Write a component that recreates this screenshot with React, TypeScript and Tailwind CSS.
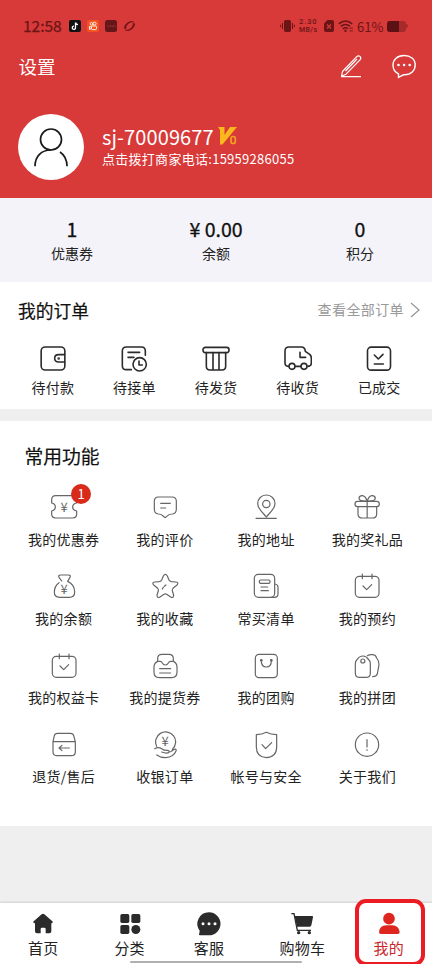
import type { ReactNode } from "react";

type Item = { label: string; icon: ReactNode; badge?: number };

const Yen = ({ y }: { y: number }) => (
  <text x="42" y={y} textAnchor="middle" fontSize="39" fill="#666" stroke="none">
    ¥
  </text>
);

const calendar = (
  <>
    <rect x="7" y="13" width="71" height="63" rx="12" />
    <path d="M28 6V20M57 6V20M30 42L41 53L56 38" />
  </>
);

const orders: Item[] = [
  {
    label: "待付款",
    icon: (
      <>
        <rect x="6.5" y="6" width="71" height="69" rx="12" />
        <path d="M77 29H59Q47 29 47 40Q47 51 59 51H77" />
        <circle cx="59" cy="40.500" r="1.500" />
      </>
    ),
  },
  {
    label: "待接单",
    icon: (
      <>
        <path d="M76 31V18Q76 6 64 6H19Q7 6 7 18V62Q7 74 19 74H34M24 22H59M24 37H42M57 48V60H67" />
        <circle cx="59" cy="58" r="20" />
      </>
    ),
  },
  {
    label: "待发货",
    icon: (
      <>
        <rect x="3" y="7" width="78" height="16" rx="7" />
        <path d="M13 23V64Q13 75 24 75H60Q71 75 71 64V23M33 23V74M51 23V74" />
      </>
    ),
  },
  {
    label: "待收货",
    icon: (
      <>
        <path d="M13 64Q3 64 3 54V18Q3 6 15 6H52Q63 6 64 19L77 28Q82 32 82 40V54Q82 64 71 64M34 64H50M48 22V37H65" />
        <circle cx="24" cy="64" r="9" />
        <circle cx="60" cy="64" r="9" />
      </>
    ),
  },
  {
    label: "已成交",
    icon: (
      <>
        <rect x="7.500" y="6.500" width="69" height="69" rx="11" />
        <path d="M28 30L40 42L54 28M28 57H55" />
      </>
    ),
  },
];

const features: Item[] = [
  {
    label: "我的优惠券",
    badge: 1,
    icon: (
      <>
        <path d="M5 20Q5 8 17 8H68Q80 8 80 20V30Q68 32 68 42Q68 52 80 54V64Q80 75 68 75H17Q5 75 5 64V54Q16 52 16 42Q16 32 5 30Z" />
        <Yen y={56} />
      </>
    ),
  },
  {
    label: "我的评价",
    icon: (
      <path d="M22 12H63Q76 12 76 25V49Q76 62 64 63Q54 63 50 68L43 74L35 68Q31 63 22 63Q10 62 10 49V25Q10 12 22 12ZM29 31H58M29 45H44" />
    ),
  },
  {
    label: "我的地址",
    icon: (
      <>
        <path d="M43 72C35 61 17 48 17 32A26 26 0 0 1 69 32C69 48 51 61 43 72ZM12 76H73" />
        <circle cx="43" cy="33" r="11" />
      </>
    ),
  },
  {
    label: "我的奖礼品",
    icon: (
      <>
        <rect x="6" y="25" width="73" height="16" rx="8" />
        <path d="M15 41V62Q15 75 28 75H58Q71 75 71 62V41M42.500 25V75M42 24Q18 26 18 15Q20 7 29 8Q38 10 42 24ZM43 24Q67 26 67 15Q65 7 56 8Q47 10 43 24Z" />
      </>
    ),
  },
  {
    label: "我的余额",
    icon: (
      <>
        <path d="M35 27L27 16Q24 9 31 9H56Q63 9 60 16L53 28C66 34 74 46 74 60Q74 76 58 76H29Q13 76 13 60C13 48 19 38 27 32" />
        <Yen y={66} />
      </>
    ),
  },
  {
    label: "我的收藏",
    icon: (
      <path d="M37 12Q43 2 49 12L54 24Q56 28 61 29L75 30Q85 32 77 40L66 49Q63 52 64 57L68 69Q68 80 59 75L47 67Q43 64 39 67L27 75Q18 80 18 69L22 57Q23 52 20 49L9 40Q1 32 11 30L25 29Q30 28 32 24ZM34 51L37 46M40 43L45 39" />
    ),
  },
  {
    label: "常买清单",
    icon: (
      <>
        <rect x="7" y="7" width="61" height="69" rx="12" />
        <rect x="22" y="24" width="32" height="10" rx="4" />
        <path d="M27 45H47M27 56H49M68 36Q78 37 78 46V66Q78 76 67 76H58" />
      </>
    ),
  },
  { label: "我的预约", icon: calendar },
  { label: "我的权益卡", icon: calendar },
  {
    label: "我的提货券",
    icon: (
      <path d="M20 28V20Q20 7 33 7H54Q67 7 67 20V28M20 28H27Q32 28 34 33Q37 39 43 39Q49 39 52 33Q54 28 60 28H67Q78 33 78 45V60Q78 77 62 77H25Q9 77 9 60V45Q9 33 20 28ZM26 50H59M26 63H59" />
    ),
  },
  {
    label: "我的团购",
    icon: (
      <>
        <rect x="10" y="7" width="66" height="70" rx="11" />
        <path d="M28 27Q28 45 43 45Q58 45 58 27" />
        <circle cx="28" cy="25" r="2.500" fill="#666" />
        <circle cx="58" cy="25" r="2.500" fill="#666" />
      </>
    ),
  },
  {
    label: "我的拼团",
    icon: (
      <>
        <path d="M7 64V35Q7 27 13 22Q19 12 30 12Q40 12 46 22Q52 27 52 35V64Q52 76 41 76H18Q7 76 7 64ZM43 11Q49 7 60 8Q68 9 71 18Q79 28 78 38L73 66Q70 74 59 74" />
        <circle cx="29.500" cy="27" r="6" />
      </>
    ),
  },
  {
    label: "退货/售后",
    icon: (
      <path d="M9 32L13 14Q15 7 22 7H62Q69 7 71 14L76 32M9 32H76V62Q76 74 64 74H21Q9 74 9 62ZM27 51H58M36 43L27 51L36 59" />
    ),
  },
  {
    label: "收银订单",
    icon: (
      <>
        <path d="M17 46A30 30 0 1 1 64 55M11 53Q22 47 32 53Q40 59 50 58Q57 60 54 64Q48 69 32 63M59 62L70 55Q77 53 75 60Q68 78 44 80Q28 80 17 72" />
        <Yen y={45} />
      </>
    ),
  },
  {
    label: "帐号与安全",
    icon: <path d="M43 4Q30 11 13 11V48Q13 78 43 80Q74 78 74 48V11Q56 11 43 4ZM30 41L41 53L59 35" />,
  },
  {
    label: "关于我们",
    icon: (
      <>
        <circle cx="42" cy="41" r="35" />
        <path d="M42 26V48M42 56V58" />
      </>
    ),
  },
];

const tabs: Item[] = [
  {
    label: "首页",
    icon: (
      <path d="M38 13Q42 10 46 13L70 34Q74 39 67 40V64Q67 70 61 70H50V57Q50 53 46 53H39Q35 53 35 57V70H24Q18 70 18 64V40Q10 39 14 34Z" />
    ),
  },
  {
    label: "分类",
    icon: (
      <>
        <rect x="13" y="12" width="27" height="27" rx="5" />
        <rect x="46" y="12" width="27" height="27" rx="5" />
        <rect x="13" y="45" width="27" height="27" rx="5" />
        <circle cx="59.500" cy="58.500" r="13.500" />
      </>
    ),
  },
  {
    label: "客服",
    icon: (
      <>
        <path d="M42 7A34.500 34.500 0 1 1 42 76H14Q10 75 13 70L14 62A34.500 34.500 0 0 1 42 7Z" />
        <g fill="#fff">
          <circle cx="24" cy="41" r="4.500" />
          <circle cx="42" cy="41" r="4.500" />
          <circle cx="60" cy="41" r="4.500" />
        </g>
      </>
    ),
  },
  {
    label: "购物车",
    icon: (
      <>
        <path d="M20 18H72Q76 18 75 22L70 46Q69 50 65 50H27Z" />
        <path d="M10 11H18L28 61H69" fill="none" stroke="#2b2b2b" strokeWidth="4" />
        <circle cx="32" cy="68" r="5" />
        <circle cx="64" cy="68" r="5" />
      </>
    ),
  },
  {
    label: "我的",
    icon: (
      <>
        <circle cx="42" cy="26" r="17.500" />
        <path d="M12 66Q14 46 34 46H52Q71 46 74 66Q74 72 68 72H18Q12 72 12 66Z" />
      </>
    ),
  },
];

const StatusBar = () => (
  <div className="flex h-[52px] items-center pr-6 pl-[23px] text-[#6c1517]">
    <span className="w-[46px] text-[15.5px] leading-none [-webkit-text-stroke:0.25px]">12:58</span>
    <svg viewBox="0 0 12 12" className="size-3">
      <rect width="12" height="12" rx="2" fill="#111" />
      <path d="M6.500 2.500V7.800A1.600 1.600 0 1 1 5 6.200M6.500 2.500Q7 4.500 9 4.600" fill="none" stroke="#fff" strokeWidth="1.300" />
    </svg>
    <svg viewBox="0 0 12 12" className="ml-1.5 size-3" fill="none" stroke="#fff" strokeWidth="0.900">
      <rect width="12" height="12" rx="2" fill="#f4511e" stroke="none" />
      <circle cx="4.500" cy="3.800" r="1.300" />
      <circle cx="7.600" cy="3.600" r="1.500" />
      <rect x="4.500" y="6" width="5" height="3.600" rx="1" />
      <path d="M4.500 7.200L2.500 6.300V9.400L4.500 8.500" />
    </svg>
    <span className="ml-1.5 flex size-3 items-center justify-center rounded-[2.5px] bg-[#651619]">
      <svg viewBox="0 0 10 3" className="w-[9px]" fill="none" stroke="#a63a3b" strokeWidth="0.700">
        <path d="M0.500 0.500L1.500 2.500L2.500 0.500M3.600 0.500V2.500M4.700 0.500L5.700 2.500L6.700 0.500" />
        <circle cx="8.400" cy="1.500" r="1" />
      </svg>
    </span>
    <svg viewBox="0 0 13 12" className="ml-1.5 h-3 w-[13px]" fill="currentColor">
      <path d="M1 8.500C1 4 6 0.300 11 1.400C7 1.800 3.500 4.500 3 7.500Q2.500 9.500 1 8.500ZM12 3.500C12 8 7 11.700 2 10.600C6 10.200 9.500 7.500 10 4.500Q10.500 2.500 12 3.500Z" />
      <path d="M3 9Q1 6 5 3Q8 0.800 11 2M10 3Q12 6 8 9Q5 11.200 2 10" fill="none" stroke="currentColor" strokeWidth="0.700" />
    </svg>
    <svg viewBox="0 0 15 12" className="ml-auto h-3 w-[15px]">
      <rect x="4" y="0" width="7" height="12" rx="1.800" fill="currentColor" />
      <path d="M2.500 3V9M0.600 4.800V7.200M12.500 3V9M14.400 4.800V7.200" fill="none" stroke="currentColor" />
    </svg>
    <span className="ml-1 flex w-[21px] flex-col font-[Roboto,sans-serif] text-[7.5px] font-medium">
      <span className="h-2 leading-2 tracking-[0.9px]">2.30</span>
      <span className="h-2 text-[7px] leading-2 tracking-[0.4px]">MB/s</span>
    </span>
    <svg viewBox="0 0 10 12" className="ml-1 h-3 w-2.5">
      <path d="M3.500 0H8Q10 0 10 2V10Q10 12 8 12H2Q0 12 0 10V3.500Z" fill="currentColor" />
      <path d="M3 4.500L7 8.500M7 4.500L3 8.500" stroke="#d83939" strokeWidth="1.200" />
    </svg>
    <svg viewBox="0 0 15 12" className="ml-1 h-3 w-[15px]" fill="none" stroke="currentColor" strokeWidth="1.500">
      <path d="M0.800 3.800Q7.500 -1.800 14.200 3.800M2.800 6.400Q7.500 2.600 12 6.200M4.800 8.800Q7.500 6.800 10 8.600" />
      <circle cx="7.500" cy="10.800" r="0.500" />
      <path d="M12.200 7.500V11.500M14 7.500V11.500" strokeWidth="1" strokeDasharray="1.500 1" />
    </svg>
    <span className="ml-1 w-[26px] text-[13px] leading-none">61%</span>
    <span className="ml-1 flex h-[11px] w-[19px] overflow-hidden rounded-[3px] bg-[#a72a2b]">
      <span className="w-3 bg-[#5c1214]" />
    </span>
    <span className="h-1 w-0.5 rounded-r-sm bg-[#a72a2b]" />
  </div>
);

const Header = () => (
  <header className="h-[198px] bg-[#d83939] text-white">
    <StatusBar />
    <div className="flex h-[28px] items-center pr-[15px] pl-[18.5px]">
      <h1 className="pb-px text-[18.5px] leading-[26px]">设置</h1>
      <svg viewBox="0 0 24 24" className="ml-auto size-6" fill="none" stroke="#fff" strokeWidth="1.200" strokeLinejoin="round">
        <path d="M3.500 17.500L17.500 2.800Q19.300 1 21 2.400Q22.600 4 21 5.800L7 20.200L2.500 22.200ZM18 5L6.500 17M2 22.700H22" />
      </svg>
      <svg viewBox="0 0 26 26" className="ml-[28px] size-[26px]" fill="none" stroke="#fff" strokeWidth="1.400">
        <path d="M7.500 20.800V24.300L12.500 21.800H13.500C20 21.600 24.200 17.500 24.200 12C24.200 6 19.500 2.500 13 2.500C6.500 2.500 2 6.500 2 12C2 16 4 19.200 7.500 20.800Z" />
        <g fill="#fff" stroke="none">
          <circle cx="7.500" cy="12" r="1.300" />
          <circle cx="13.100" cy="12" r="1.300" />
          <circle cx="18.700" cy="12" r="1.300" />
        </g>
      </svg>
    </div>
    <div className="flex items-center pt-[34px] pl-[18px]">
      <div className="flex size-[66px] items-center justify-center rounded-full bg-white">
        <svg viewBox="0 0 36 40" className="h-10 w-9" fill="none" stroke="#1a1a1a" strokeWidth="1.700">
          <circle cx="18" cy="12.500" r="10.500" />
          <path d="M2 39.300C2 29 8.500 23 18 23M27 25C31.500 28 34 33 34 39.300" />
        </svg>
      </div>
      <div className="pl-[18px]">
        <div className="flex h-6 items-center text-[20px] leading-6 tracking-[0.1px]">
          sj-70009677
          <svg viewBox="0 0 20 20" className="mb-0.5 ml-[3px] size-5">
            <path d="M1 1H7.500V9L13 1H20L5.500 18.500H3V4Z" fill="#fbb81c" />
            <rect x="14" y="10.500" width="4.300" height="7" rx="2" fill="none" stroke="#f3a022" strokeWidth="1.700" />
          </svg>
        </div>
        <p className="text-[13px] leading-5 tracking-[0.28px]">点击拨打商家电话:15959286055</p>
      </div>
    </div>
  </header>
);

const Stats = () => (
  <div className="grid h-[84px] grid-cols-3 bg-[#f4f3f9] pt-[19px] text-center">
    {[
      ["1", "优惠券"],
      ["¥ 0.00", "余额"],
      ["0", "积分"],
    ].map(([value, label]) => (
      <div key={label}>
        <div className="text-[19.5px] leading-6 text-[#111] [-webkit-text-stroke:0.3px]">{value}</div>
        <div className="text-[14px] leading-6">{label}</div>
      </div>
    ))}
  </div>
);

const Orders = () => (
  <section className="h-[127px] bg-white">
    <div className="flex items-center justify-between pt-4 pr-3 pl-[18px]">
      <h2 className="text-[17.8px] leading-6 text-[#111] [-webkit-text-stroke:0.2px]">我的订单</h2>
      <div className="flex items-center text-[14px] leading-[22px] tracking-[0.4px] text-[#999]">
        <span className="pb-0.5">查看全部订单</span>
        <svg viewBox="0 0 10 16" className="ml-1.5 h-4 w-2.5" fill="none" stroke="#999" strokeWidth="1.300">
          <path d="M1 1L9 8L1 15" />
        </svg>
      </div>
    </div>
    <div className="grid grid-cols-5 px-3 pt-[23px]">
      {orders.map(({ label, icon }) => (
        <div key={label} className="flex flex-col items-center">
          <svg viewBox="0 0 84 84" className="size-7" fill="none" stroke="#2b2b2b" strokeWidth="4.800" strokeLinecap="round" strokeLinejoin="round">
            {icon}
          </svg>
          <span className="mt-0.5 text-[14px] leading-6 tracking-[0.2px]">{label}</span>
        </div>
      ))}
    </div>
  </section>
);

const Features = () => (
  <section className="mt-3 h-[405px] bg-white pt-[23px]">
    <h2 className="pl-[24.5px] text-[18.8px] leading-6 text-[#111] [-webkit-text-stroke:0.2px]">常用功能</h2>
    <div className="grid auto-rows-[79.3px] grid-cols-4 pt-[25px] pr-[14px] pl-[13px]">
      {features.map(({ label, icon, badge }) => (
        <div key={label} className="relative flex flex-col items-center">
          <svg viewBox="0 0 84 84" className="size-7" fill="none" stroke="#666" strokeWidth="3.600" strokeLinecap="round" strokeLinejoin="round">
            {icon}
          </svg>
          {badge && (
            <span className="absolute -top-[9px] left-[58px] flex size-5 items-center justify-center rounded-full bg-[#d92b1a] text-[13px] text-white">
              {badge}
            </span>
          )}
          <span className="mt-[5.5px] text-[14px] leading-6 tracking-[0.3px]">{label}</span>
        </div>
      ))}
    </div>
  </section>
);

const TabBar = () => (
  <nav className="relative mt-[77px] grid h-[61px] grid-cols-5 bg-white pt-[7px] shadow-[0_-1px_2px_#cfcfcf]">
    {tabs.map(({ label, icon }) => (
      <div
        key={label}
        className={`flex flex-col items-center ${label === "客服" ? "pr-[14px]" : ""} ${label === "我的" ? "text-[#c9252b]" : ""}`}
      >
        <svg viewBox="0 0 84 84" className="size-7" fill={label === "我的" ? "#dc261f" : "#2b2b2b"}>
          {icon}
        </svg>
        <span className="text-[15px] leading-5 tracking-[0.2px]">{label}</span>
      </div>
    ))}
    <span className="absolute bottom-[1px] left-[130px] h-[2.500px] w-[172px] rounded-full bg-[#b0b0b0]" />
    <span className="absolute -top-1 left-[355px] h-[67px] w-[70px] rounded-[11px] border-4 border-[#ec1c24]" />
  </nav>
);

export default function App() {
  return (
    <div className="h-[964px] w-[432px] overflow-hidden bg-[#efefef] font-['Noto_Sans_CJK_SC',sans-serif] text-[#222]">
      <Header />
      <Stats />
      <Orders />
      <Features />
      <TabBar />
    </div>
  );
}
